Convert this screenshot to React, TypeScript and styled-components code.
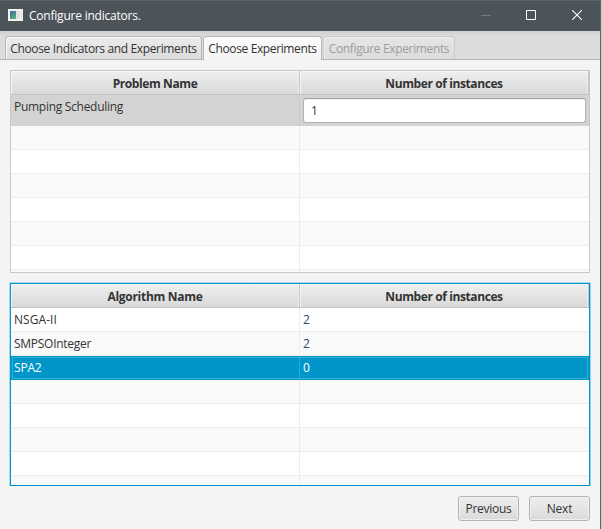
import React from "react";
import styled, { createGlobalStyle, css } from "styled-components";

const GlobalStyle = createGlobalStyle`
  * { box-sizing: border-box; }
  html, body { margin: 0; padding: 0; overflow: hidden; }
  body {
    font-family: "Open Sans", "Noto Sans", sans-serif;
    font-size: 12px;
    color: #333;
  }
`;

const Window = styled.div`
  width: 602px;
  height: 529px;
  display: flex;
  flex-direction: column;
  background: #f4f4f4;
  border-right: 1px solid #c8cacc;
`;

const TitleBar = styled.header`
  height: 31px;
  flex: none;
  display: flex;
  align-items: center;
  padding-left: 8px;
  background: #4c545a;
  border-top: 1px solid #59656b;
  border-right: 1px solid #59656b;
  color: #fff;
`;

const Title = styled.h1`
  margin: 0 0 0 6px;
  flex: 1;
  font-size: 12px;
  font-weight: 400;
  line-height: 16px;
  letter-spacing: -0.22px;
`;

const Controls = styled.div`
  display: flex;
  align-items: center;
`;

const ControlButton = styled.button<{ $dim?: boolean }>`
  width: ${(p) => (p.$dim ? 44 : 46)}px;
  height: 30px;
  padding: 0 0 2px;
  border: 0;
  display: flex;
  align-items: center;
  justify-content: center;
  background: none;
  color: ${(p) => (p.$dim ? "#747b80" : "#fff")};
`;

const Body = styled.div`
  flex: 1;
  min-height: 0;
  display: flex;
  flex-direction: column;
  border-right: 1px solid #59656b;
`;

const TabStrip = styled.nav`
  height: 29px;
  flex: none;
  display: flex;
  align-items: flex-end;
  gap: 1px;
  padding-left: 5px;
  background: linear-gradient(#cfcfcf, #dcdcdc 5px, #dddddd);
  box-shadow: inset 0 -1px #b5b5b5;
`;

const Tab = styled.button<{ $width: number; $active?: boolean; $spacing: number }>`
  width: ${(p) => p.$width}px;
  height: ${(p) => (p.$active ? 24 : 23)}px;
  margin-bottom: ${(p) => (p.$active ? 0 : 1)}px;
  padding: 0;
  border: 1px solid #b5b5b5;
  border-bottom: 0;
  border-radius: 3px 3px 0 0;
  font: inherit;
  line-height: 23px;
  white-space: nowrap;
  letter-spacing: ${(p) => p.$spacing}px;
  color: #333;
  background: ${(p) => (p.$active ? "linear-gradient(#fbfbfb, #f4f4f4)" : "linear-gradient(#ececec, #dbdbdb)")};
  box-shadow: inset 1px 1px #fafafa;
  &:disabled {
    color: #9d9d9d;
    border-color: #cbcbcb;
    background: linear-gradient(#e6e6e6, #dcdcdc);
    box-shadow: inset 1px 1px #ececec;
  }
`;

const Content = styled.main`
  flex: 1;
  min-height: 0;
  display: flex;
  flex-direction: column;
  gap: 10px;
  padding: 10px 10px 0;
`;

const TableBox = styled.section<{ $focused?: boolean }>`
  width: 580px;
  height: 203px;
  flex: none;
  overflow: hidden;
  border: 1px solid #c8c8c8;
  background: #f9f9f9;
  ${(p) =>
    p.$focused &&
    css`
      border-color: #0096c9;
      box-shadow: 1px 0 #8fd6ee, -1px 0 #a8dbec, 0 -1px #a8dbec;
    `}
`;

const HeaderRow = styled.div`
  height: 24px;
  display: grid;
  grid-template-columns: 289px 289px;
`;

const HeaderCell = styled.div<{ $spacing: number }>`
  height: 24px;
  border-right: 1px solid #c3c3c3;
  border-bottom: 1px solid #c3c3c3;
  background: linear-gradient(#efefef, #d9d9d9);
  box-shadow: inset 1px 1px #f7f7f7, inset -1px 0 #eeeeee;
  text-align: center;
  font-weight: 700;
  line-height: 26px;
  letter-spacing: ${(p) => p.$spacing}px;
`;

type RowTone = "plain" | "striped" | "muted" | "selected";

const toneColor: Record<RowTone, string> = {
  plain: "#fff",
  striped: "#f9f9f9",
  muted: "#d3d3d3",
  selected: "#0096c9",
};

const Row = styled.div<{ $tone: RowTone; $height?: number }>`
  height: ${(p) => p.$height ?? 24}px;
  display: grid;
  grid-template-columns: 289px 289px;
  background: ${(p) => toneColor[p.$tone]};
  border-bottom: ${(p) => (p.$tone === "plain" || p.$tone === "striped" ? "1px solid #ededed" : "0")};
  color: ${(p) => (p.$tone === "selected" ? "#fff" : "#333")};
  ${(p) =>
    p.$tone === "selected" &&
    css`
      box-shadow: inset 0 0 0 1px #0096c9, inset 0 0 0 2px #38add6;
    `}
`;

const Cell = styled.div<{ $tone: RowTone; $spacing?: number; $link?: boolean }>`
  min-width: 0;
  height: ${(p) => (p.$tone === "plain" || p.$tone === "striped" ? "23px" : "auto")};
  padding-left: 3px;
  line-height: 24px;
  letter-spacing: ${(p) => p.$spacing ?? 0}px;
  color: ${(p) => (p.$link ? "#2b4a70" : "inherit")};
  &:first-child {
    border-right: 1px solid
      ${(p) => (p.$tone === "selected" ? "#2ba8d3" : p.$tone === "muted" ? "#cccccc" : "#ededed")};
  }
`;

const EditField = styled.input`
  display: block;
  width: 283px;
  height: 25px;
  margin: 3px 0 0;
  padding: 0 7px;
  border: 1px solid #b3b3b3;
  border-top-color: #a3a3a3;
  border-radius: 3px;
  background: #fff;
  box-shadow: inset 0 1px 1px #eeeeee;
  font: inherit;
  color: #333;
  outline: none;
`;

const Actions = styled.footer`
  display: flex;
  justify-content: flex-end;
  gap: 10px;
`;

const ActionButton = styled.button<{ $spacing: number }>`
  width: 61px;
  height: 25px;
  padding: 0;
  border: 1px solid #b4b4b4;
  border-radius: 3px;
  background: linear-gradient(#efefef, #dadada);
  box-shadow: inset 0 0 0 1px #f0f0f0;
  font: inherit;
  letter-spacing: ${(p) => p.$spacing}px;
  color: #333;
`;

const IconImage = styled.svg`
  flex: none;
  margin-bottom: 2px;
`;

const AppIcon = () => (
  <IconImage width="15" height="12" viewBox="0 0 15 12">
    <defs>
      <linearGradient id="pane" x1="0" y1="0" x2="0.6" y2="1">
        <stop offset="0" stopColor="#44709a" />
        <stop offset="0.5" stopColor="#438c90" />
        <stop offset="1" stopColor="#55ad78" />
      </linearGradient>
    </defs>
    <rect width="15" height="12" fill="#f3f3f3" />
    <rect x="2" y="2" width="6" height="8" fill="url(#pane)" />
    <rect x="8" y="2" width="4" height="8" fill="#e2e2e2" />
    <rect x="13" y="2" width="1" height="8" fill="#d7dfdd" />
  </IconImage>
);

type Item = { name: string; count: string; tone: RowTone; spacing: number };

const algorithms: Item[] = [
  { name: "NSGA-II", count: "2", tone: "plain", spacing: 0.05 },
  { name: "SMPSOInteger", count: "2", tone: "striped", spacing: -0.27 },
  { name: "SPA2", count: "0", tone: "selected", spacing: -0.2 },
];

const EmptyRows = ({ count }: { count: number }) => (
  <>
    {Array.from({ length: count }, (_, i) => {
      const tone: RowTone = i % 2 ? "plain" : "striped";
      return (
        <Row key={i} $tone={tone}>
          <Cell $tone={tone} />
          <Cell $tone={tone} />
        </Row>
      );
    })}
  </>
);

export default function App() {
  return (
    <Window>
      <GlobalStyle />
      <TitleBar>
        <AppIcon />
        <Title>Configure indicators.</Title>
        <Controls>
          <ControlButton $dim aria-label="Minimize">
            <svg width="10" height="10"><path d="M0 5.5H10" stroke="currentColor" /></svg>
          </ControlButton>
          <ControlButton aria-label="Maximize">
            <svg width="10" height="10"><path d="M.5.5h9v9h-9z" fill="none" stroke="currentColor" /></svg>
          </ControlButton>
          <ControlButton aria-label="Close">
            <svg width="10" height="10"><path d="M0 0L10 10M10 0L0 10" stroke="currentColor" strokeWidth="1.1" /></svg>
          </ControlButton>
        </Controls>
      </TitleBar>
      <Body>
        <TabStrip>
          <Tab $width={197} $spacing={-0.36}>Choose Indicators and Experiments</Tab>
          <Tab $width={119} $spacing={-0.38} $active>Choose Experiments</Tab>
          <Tab $width={132} $spacing={-0.36} disabled>Configure Experiments</Tab>
        </TabStrip>
        <Content>
          <TableBox>
            <HeaderRow>
              <HeaderCell $spacing={-0.4}>Problem Name</HeaderCell>
              <HeaderCell $spacing={-0.4}>Number of instances</HeaderCell>
            </HeaderRow>
            <Row $tone="muted" $height={31}>
              <Cell $tone="muted" $spacing={-0.28}>Pumping Scheduling</Cell>
              <Cell $tone="muted"><EditField defaultValue="1" /></Cell>
            </Row>
            <EmptyRows count={7} />
          </TableBox>
          <TableBox $focused>
            <HeaderRow>
              <HeaderCell $spacing={-0.28}>Algorithm Name</HeaderCell>
              <HeaderCell $spacing={-0.4}>Number of instances</HeaderCell>
            </HeaderRow>
            {algorithms.map((a) => (
              <Row key={a.name} $tone={a.tone}>
                <Cell $tone={a.tone} $spacing={a.spacing}>{a.name}</Cell>
                <Cell $tone={a.tone} $link={a.tone !== "selected"}>{a.count}</Cell>
              </Row>
            ))}
            <EmptyRows count={5} />
          </TableBox>
          <Actions>
            <ActionButton $spacing={-0.25}>Previous</ActionButton>
            <ActionButton $spacing={-0.2}>Next</ActionButton>
          </Actions>
        </Content>
      </Body>
    </Window>
  );
}
